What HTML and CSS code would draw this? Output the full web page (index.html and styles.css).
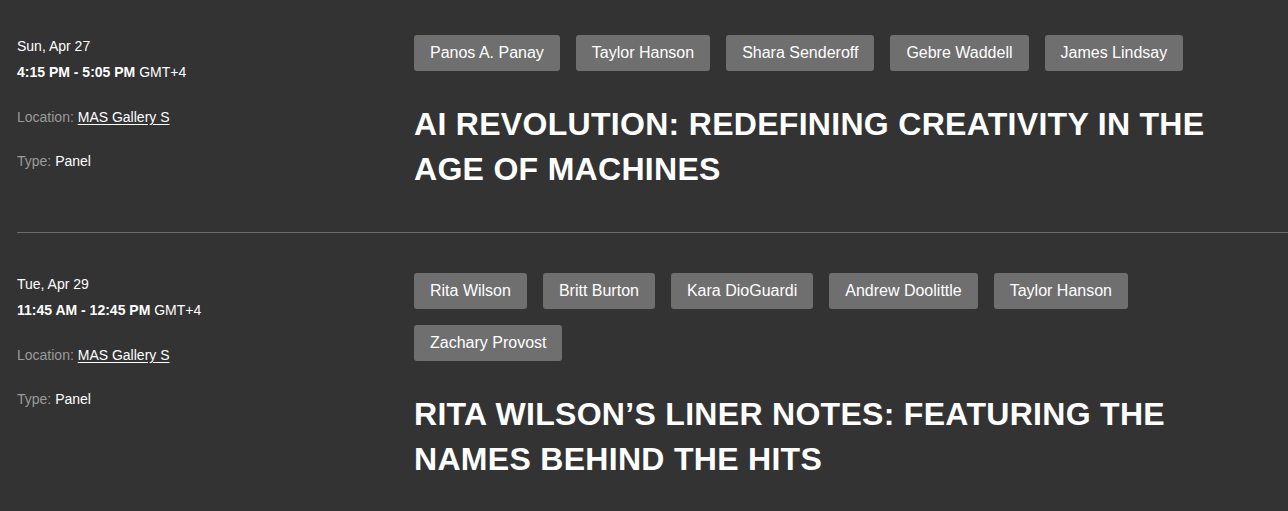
FILE: index.html
```html
<!DOCTYPE html>
<html>
<head>
<meta charset="utf-8">
<link rel="stylesheet" href="styles.css">
</head>
<body>
<main class="list">
  <section class="session">
    <div class="meta">
      <div class="date">Sun, Apr 27</div>
      <div class="time"><strong>4:15 PM - 5:05 PM</strong> GMT+4</div>
      <div class="field"><span class="label">Location:</span> <a href="#">MAS Gallery S</a></div>
      <div class="field"><span class="label">Type:</span> Panel</div>
    </div>
    <div class="content">
      <ul class="tags">
        <li>Panos A. Panay</li>
        <li>Taylor Hanson</li>
        <li>Shara Senderoff</li>
        <li>Gebre Waddell</li>
        <li>James Lindsay</li>
      </ul>
      <h2 class="title">AI Revolution: Redefining Creativity in the Age of Machines</h2>
    </div>
  </section>
  <section class="session">
    <div class="meta">
      <div class="date">Tue, Apr 29</div>
      <div class="time"><strong>11:45 AM - 12:45 PM</strong> GMT+4</div>
      <div class="field"><span class="label">Location:</span> <a href="#">MAS Gallery S</a></div>
      <div class="field"><span class="label">Type:</span> Panel</div>
    </div>
    <div class="content">
      <ul class="tags">
        <li>Rita Wilson</li>
        <li>Britt Burton</li>
        <li>Kara DioGuardi</li>
        <li>Andrew Doolittle</li>
        <li>Taylor Hanson</li>
        <li>Zachary Provost</li>
      </ul>
      <h2 class="title">Rita Wilson’s Liner Notes: Featuring the Names Behind the Hits</h2>
    </div>
  </section>
</main>
</body>
</html>
```

FILE: styles.css
```css
html, body {
  margin: 0;
  padding: 0;
  background: #333333;
  color: #ffffff;
  font-family: "Liberation Sans", Arial, sans-serif;
}

.list {
  padding-left: 17px;
}

.session {
  display: flex;
  padding-top: 35px;
  padding-bottom: 36px;
  border-bottom: 1px solid #6a6a6a;
}

.session + .session {
  padding-top: 40px;
  border-bottom: none;
}

.meta {
  width: 397px;
  flex-shrink: 0;
  font-size: 14px;
  line-height: 18px;
  padding-top: 2px;
}

.date {
  margin-bottom: 8px;
}

.time {
  margin-bottom: 27px;
}

.time strong {
  font-weight: 700;
}

.field {
  margin-bottom: 26px;
}

.label {
  color: #9a9a9a;
}

.field a {
  color: #ffffff;
  text-decoration: underline;
  text-underline-offset: 2px;
}

.content {
  flex: 1;
  padding-right: 40px;
}

.tags {
  list-style: none;
  margin: 0;
  padding: 0;
  display: flex;
  flex-wrap: wrap;
  gap: 16px 16px;
}

.tags li {
  background: #6f6f6f;
  border-radius: 3px;
  height: 36px;
  line-height: 36px;
  padding: 0 16px;
  font-size: 16px;
  color: #ffffff;
}

.title {
  margin: 31px 0 0;
  font-size: 32px;
  line-height: 45px;
  font-weight: 700;
  text-transform: uppercase;
  letter-spacing: 0.3px;
  max-width: 820px;
}
```
